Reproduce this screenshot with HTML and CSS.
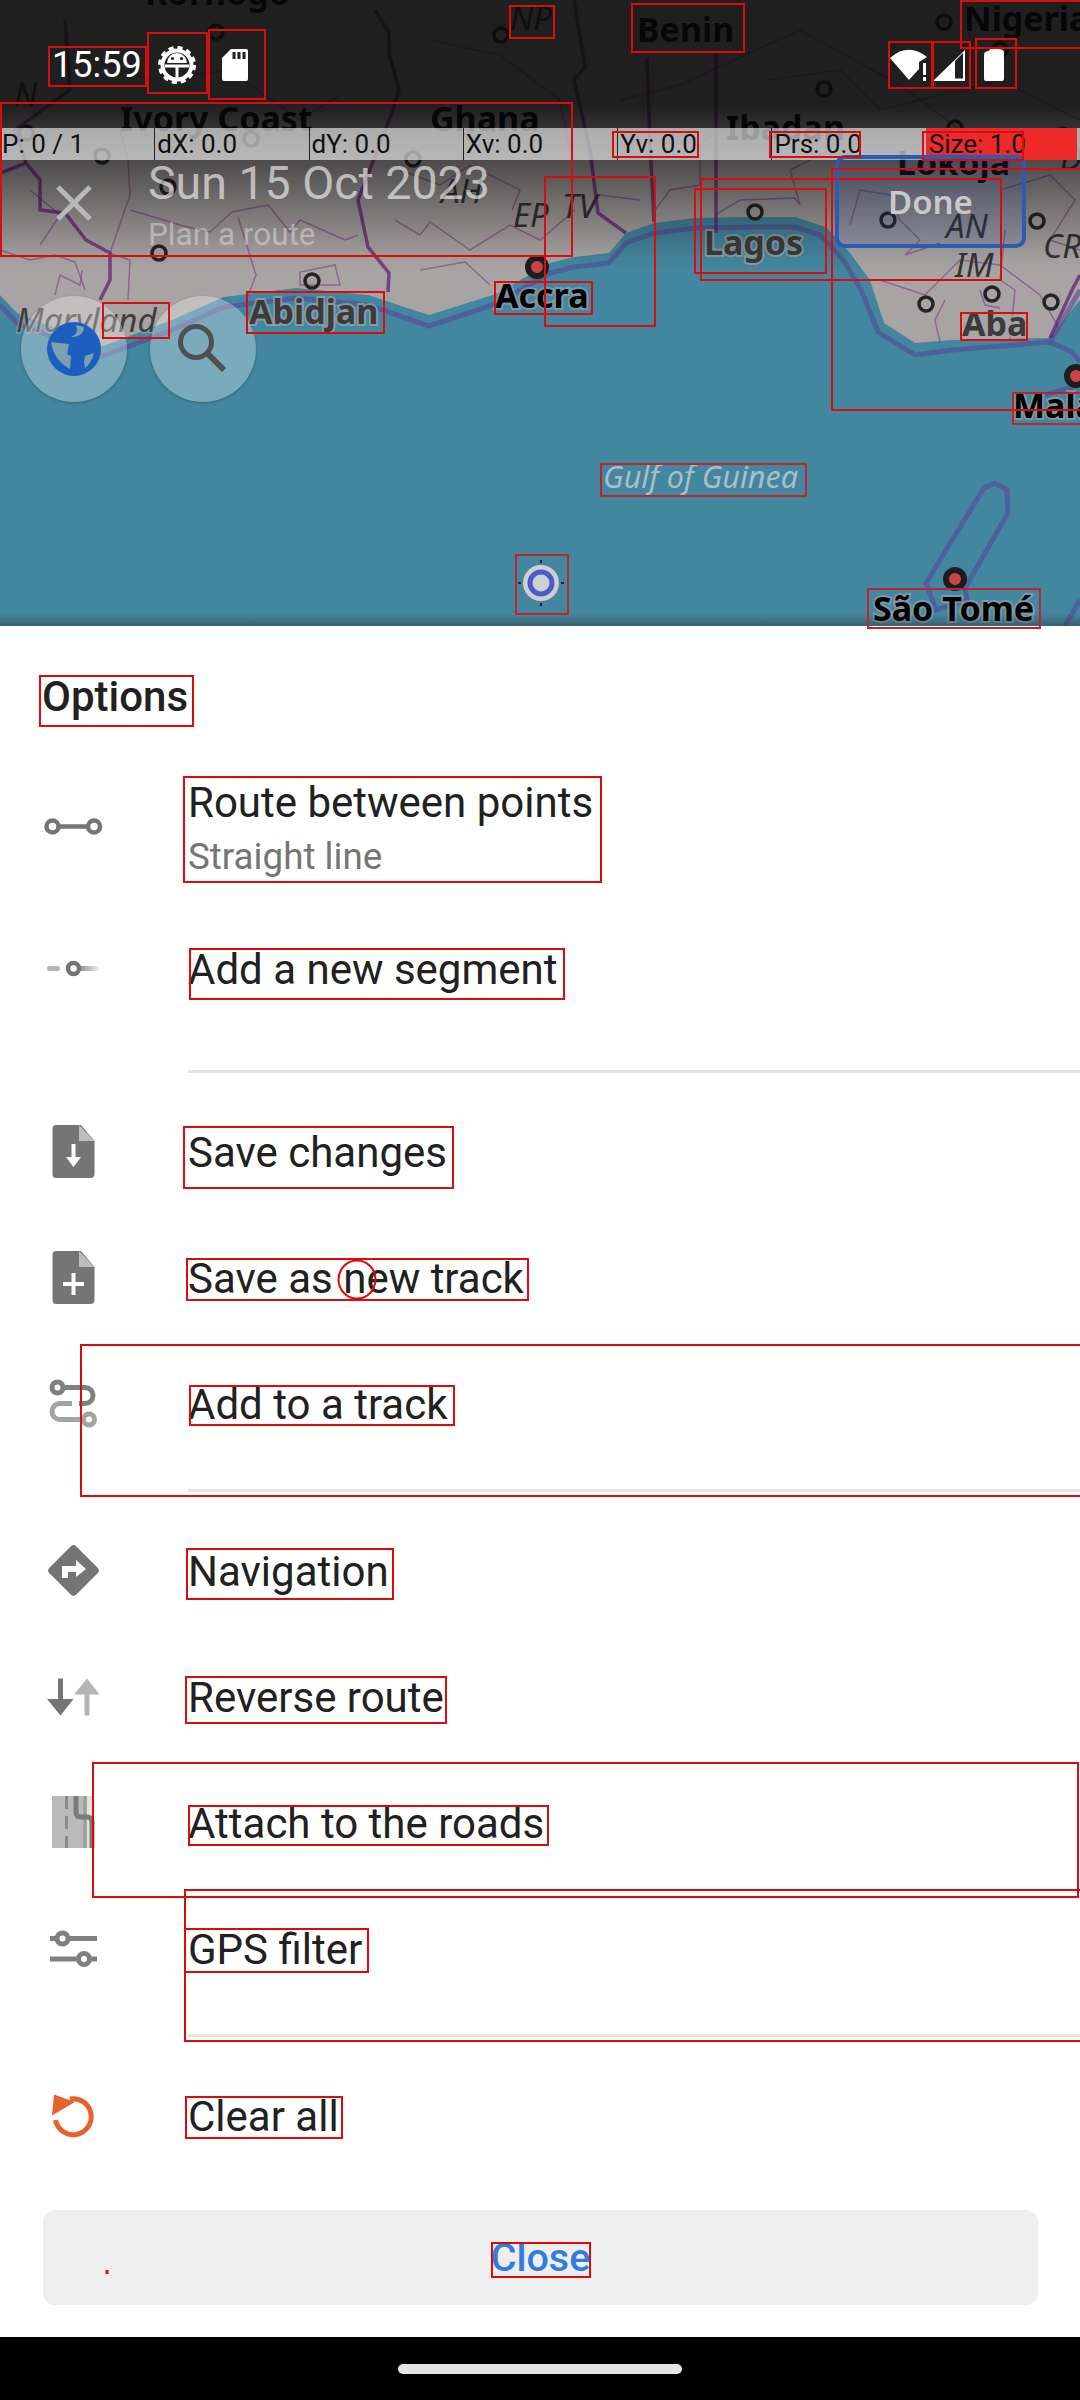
FILE: index.html
```html
<!DOCTYPE html>
<html lang="en">
<head>
<meta charset="utf-8">
<title>Plan a route</title>
<link rel="stylesheet" href="styles.css">
</head>
<body>
<div class="page">
  <section class="map">
    <svg class="map-canvas" width="1080" height="626" viewBox="0 0 1080 626">
      <rect width="1080" height="626" class="sea"/>
      <path class="land" d="M0,0 L1080,0 L1080,300 L1062,322 L1050,338 L953,340 L915,343 L884,323 L870,280 L850,253 L826,227 L795,217 L753,217 L695,218 L654,223 L626,233 L609,253 L574,257 L550,263 L496,294 L429,315 L368,295 L296,288 L224,297 L172,320 L103,346 L60,330 L17,313 L0,295 Z"/>
      <path class="sea-border" d="M0,305 L17,323 L60,340 L103,356 L172,330 L224,307 L296,298 L368,305 L429,326 L496,304 L550,273 L574,267 L609,263 L626,243 L654,233 L695,228 L753,227 L795,227 L820,235 L845,262 L862,292 L878,332 L915,355 L953,350 L1050,342 L1080,290"/>
      <path class="sea-border" d="M1050,342 L1072,352 L1080,362 M1080,385 L1045,395 M926,583 L984,488 L995,483 L1007,490 L1008,513 L965,588 L967,600 L936,610 Z M1065,626 L1080,600"/>
      <g class="thin">
        <path d="M110,253 L130,195 L128,160 L120,130"/>
        <path d="M110,253 L130,260 L128,300"/>
        <path d="M40,245 L60,215 L30,190"/>
        <path d="M0,250 L30,260 L55,255 L75,262 L85,290"/>
        <path d="M130,210 L180,225 L210,232 L232,212 L268,205 L290,232 L300,220 L345,240 L358,235"/>
        <path d="M238,217 L256,275 L248,296"/>
        <path d="M55,295 L60,275 L80,285 L82,270"/>
        <path d="M300,272 L335,265 L340,285 L300,285 Z"/>
        <path d="M395,220 L420,235 L430,222 L470,250 L510,225 L540,240 L575,210"/>
        <path d="M400,170 L440,185 L470,165 L520,190 L512,210"/>
        <path d="M420,270 L465,262 L490,285"/>
        <path d="M640,200 L600,195 L585,215"/>
        <path d="M655,210 L670,190 L700,185 L700,145 L716,130"/>
        <path d="M715,215 L740,200 L795,198 L800,205 L790,170 L830,150"/>
        <path d="M850,225 L860,190 L890,195 L900,220 L920,240 L905,255 L940,243"/>
        <path d="M1000,190 L1050,175 L1075,200 L1050,240 L1080,250"/>
        <path d="M1005,230 L1000,280 L1015,290 L1010,340"/>
        <path d="M880,280 L925,295 L960,260 L1000,265 L1040,295 L1060,330"/>
        <path d="M945,300 L935,320 L940,342"/>
        <path d="M980,290 L985,305 L1000,308"/>
        <path d="M70,50 L150,80 L230,70 L300,120 L340,95"/>
        <path d="M430,40 L500,55 L560,100 L570,150"/>
        <path d="M620,100 L680,85 L800,30 L900,85 L960,130"/>
        <path d="M770,80 L840,70 L880,110 L1000,80 L1080,120"/>
      </g>
      <g class="thick">
        <path d="M375,10 L389,33 L389,53 L399,90 L392,113 L358,200 L368,247 L389,273 L388,292"/>
        <path d="M0,173 L26,163 L40,180 L40,210 L65,213 L86,240 L110,253 L110,280 L100,300"/>
        <path d="M26,163 L15,130 L70,90 L65,20"/>
        <path d="M574,0 L585,67 L574,80 L590,150 L598,213 L626,233"/>
        <path d="M647,57 L650,143 L654,222"/>
        <path d="M716,53 L716,233"/>
        <path d="M1050,338 L1072,290 L1080,275"/>
      </g>
      <g class="town">
        <circle cx="216" cy="32" r="7"/><circle cx="501" cy="35" r="7"/><circle cx="102" cy="156" r="7"/>
        <circle cx="26" cy="133" r="7"/><circle cx="251" cy="139" r="7"/><circle cx="413" cy="159" r="7"/>
        <circle cx="168" cy="187" r="7"/><circle cx="159" cy="253" r="7"/><circle cx="312" cy="281" r="7"/>
        <circle cx="944" cy="22" r="7"/><circle cx="824" cy="89" r="7"/><circle cx="955" cy="128" r="7"/>
        <circle cx="1063" cy="135" r="7"/><circle cx="755" cy="212" r="7"/><circle cx="888" cy="220" r="7"/>
        <circle cx="1037" cy="221" r="7"/><circle cx="926" cy="304" r="7"/><circle cx="992" cy="294" r="7"/>
        <circle cx="1051" cy="302" r="7"/><circle cx="1000" cy="50" r="7"/>
      </g>
      <g class="capital">
        <circle cx="537" cy="267" r="9"/><circle cx="1076" cy="376" r="9"/><circle cx="955" cy="579" r="9"/>
      </g>
      <text class="lbl-dark" x="145" y="5">Korhogo</text>
      <text class="lbl-dark" x="120" y="131">Ivory Coast</text>
      <text class="lbl-dark" x="430" y="131">Ghana</text>
      <text class="lbl-dark" x="637" y="42">Benin</text>
      <text class="lbl-dark" x="964" y="31">Nigeria</text>
      <text class="lbl-dark" x="726" y="140">Ibadan</text>
      <text class="lbl-dark" x="897" y="175">Lokoja</text>
      <text class="lbl-city" x="704" y="255">Lagos</text>
      <text class="lbl-city" x="249" y="324">Abidjan</text>
      <text class="lbl-city" x="962" y="336">Aba</text>
      <text class="lbl-capital" x="495" y="308">Accra</text>
      <text class="lbl-capital" x="1013" y="418">Malabo</text>
      <text class="lbl-capital" x="873" y="621">São Tomé</text>
      <text class="lbl-sea" x="603" y="488">Gulf of Guinea</text>
      <text class="lbl-region" x="16" y="332">Maryland</text>
      <text class="lbl-state" x="946" y="238">AN</text>
      <text class="lbl-state" x="955" y="277">IM</text>
      <text class="lbl-state" x="1043" y="258">CR</text>
      <text class="lbl-state" x="562" y="218">TV</text>
      <text class="lbl-state" x="513" y="227">EP</text>
      <text class="lbl-state" x="441" y="203">AH</text>
      <text class="lbl-state" x="510" y="30">NP</text>
      <text class="lbl-state" x="14" y="107">N</text>
      <text class="lbl-state" x="1060" y="170">D</text>
      <g class="marker">
        <circle class="marker-disc" cx="541" cy="583" r="18"/>
        <circle class="marker-ring" cx="541" cy="583" r="11"/>
        <path class="marker-tick" d="M541,560 V563 M541,603 V606 M518,583 H521 M561,583 H564"/>
      </g>
    </svg>
    <div class="scrim"></div>
    <div class="shade"></div>

    <div class="statusbar">
      <span class="clock">15:59</span>
      <svg class="st-gear" width="40" height="40" viewBox="0 0 40 40">
        <circle class="w-line" cx="20" cy="20" r="14.5"/>
        <circle class="w-teeth" cx="20" cy="20" r="17"/>
        <path class="w-fill" d="M10,18 A10,10 0 0 1 30,18 Z"/>
        <circle class="d-fill" cx="15.5" cy="13.5" r="1.6"/><circle class="d-fill" cx="24.5" cy="13.5" r="1.6"/>
        <path class="w-line2" d="M8,21 H32 M20,21 V33"/>
      </svg>
      <svg class="st-sd" width="26" height="32" viewBox="0 0 26 32">
        <path class="w-fill" d="M9,0 H24 Q26,0 26,2 V30 Q26,32 24,32 H2 Q0,32 0,30 V9 Z"/>
        <path class="d-line" d="M12,3 V10 M17,3 V10 M22,3 V10"/>
      </svg>
      <span class="st-spacer"></span>
      <svg class="st-net" width="122" height="32" viewBox="0 0 122 32">
        <path class="w-fill" d="M0,9 Q18,-7 37,8 L29,13 V20 L19,31 Z"/>
        <path class="w-fill" d="M33,14 H36 V26 H33 Z M33,28 H36 V32 H33 Z"/>
        <path class="w-fill" d="M43,32 L75,1 V32 Z"/>
        <path class="d-fill" d="M65,12 L73,4 V29.500 H65 Z"/>
        <path class="w-fill" d="M99,2 Q99,0 101,0 H107 Q114,0 114,3 V30 Q114,32 112,32 H96 Q94,32 94,30 V6 Q94,2 99,2 Z"/>
      </svg>
    </div>

    <div class="debug">
      <span class="dbg">P: 0 / 1</span>
      <span class="dbg dbg-sep">dX: 0.0</span>
      <span class="dbg dbg-sep">dY: 0.0</span>
      <span class="dbg dbg-sep">Xv: 0.0</span>
      <span class="dbg dbg-sep">Yv: 0.0</span>
      <span class="dbg dbg-sep">Prs: 0.0</span>
      <span class="dbg dbg-hot">Size: 1.0</span>
    </div>

    <div class="toolbar">
      <svg class="tb-close" width="36" height="36" viewBox="0 0 36 36"><path d="M2,2 L34,34 M34,2 L2,34"/></svg>
      <div class="tb-titles">
        <div class="tb-title">Sun 15 Oct 2023</div>
        <div class="tb-sub">Plan a route</div>
      </div>
      <div class="done"><span>Done</span></div>
    </div>

    <div class="fab fab-globe">
      <svg width="54" height="54" viewBox="0 0 54 54">
        <circle class="globe-bg" cx="27" cy="27" r="27"/>
        <path class="globe-land" d="M4,20 L12,21 L22,22 L20,32 L24,34 L23,47 C15,43 6,34 4,20 Z"/>
        <path class="globe-land" d="M29,3 L37,5 C37,10 34,14 27,15 L24,15 C30,13 31,8 29,3 Z"/>
        <path class="globe-land" d="M38,34 L47,31 C45,38 42,43 38,46 L37,40 Z"/>
      </svg>
    </div>
    <div class="fab fab-search">
      <svg width="54" height="54" viewBox="0 0 54 54">
        <circle class="search-ring" cx="20" cy="20" r="15.500"/>
        <path class="search-handle" d="M31,31 L48,48"/>
      </svg>
    </div>
  </section>

  <section class="sheet">
    <h2 class="sheet-title">Options</h2>

    <div class="row row-two">
      <svg class="ic" width="63" height="63" viewBox="0 0 63 63">
        <circle class="ic-line" cx="10.500" cy="31.500" r="6"/><circle class="ic-line" cx="52" cy="31.500" r="6"/>
        <path class="ic-line" d="M16.500,31.500 H46"/>
      </svg>
      <div class="row-text">
        <div class="row-title">Route between points</div>
        <div class="row-sub">Straight line</div>
      </div>
    </div>
    <div class="row">
      <svg class="ic" width="63" height="63" viewBox="0 0 63 63">
        <defs><linearGradient id="fade"><stop offset="0" stop-color="#8a8a8a"/><stop offset="1" stop-color="#f2f2f2"/></linearGradient></defs>
        <rect class="ic-light" x="5" y="29" width="13" height="5" rx="2.500"/>
        <rect x="37" y="29" width="20" height="5" fill="url(#fade)"/>
        <circle class="ic-line" cx="31.500" cy="31.500" r="5.500"/>
      </svg>
      <div class="row-title">Add a new segment</div>
    </div>
    <div class="divider divider-wide"></div>

    <div class="row">
      <svg class="ic" width="63" height="63" viewBox="0 0 63 63">
        <path class="ic-dark" d="M14,5 H39 L52.500,21 V54 Q52.500,58 48.500,58 H14 Q10.500,58 10.500,54 V9 Q10.500,5 14,5 Z"/>
        <path class="ic-fold" d="M37,5 L52.500,21 H37 Z"/>
        <path class="ic-white" d="M29.500,24 H33.500 V37 H39 L31.500,47 L24,37 H29.500 Z"/>
      </svg>
      <div class="row-title">Save changes</div>
    </div>
    <div class="row">
      <svg class="ic" width="63" height="63" viewBox="0 0 63 63">
        <path class="ic-dark" d="M14,5 H39 L52.500,21 V54 Q52.500,58 48.500,58 H14 Q10.500,58 10.500,54 V9 Q10.500,5 14,5 Z"/>
        <path class="ic-fold" d="M37,5 L52.500,21 H37 Z"/>
        <path class="ic-white" d="M29.500,27 H33.500 V36 H42 V40 H33.500 V49 H29.500 V40 H21 V36 H29.500 Z"/>
      </svg>
      <div class="row-title">Save as new track</div>
    </div>
    <div class="row">
      <svg class="ic" width="63" height="63" viewBox="0 0 63 63">
        <circle class="ic-mid" cx="15.500" cy="15.500" r="5.500"/>
        <path class="ic-mid" d="M21,15.500 H43 A8,8 0 0 1 43,31.500 H37"/>
        <path class="ic-soft" d="M30,31.500 H18 A8,8 0 0 0 18,47.500 H41"/>
        <circle class="ic-soft" cx="47" cy="47.500" r="5.500"/>
      </svg>
      <div class="row-title">Add to a track</div>
    </div>
    <div class="divider"></div>

    <div class="row">
      <svg class="ic" width="63" height="63" viewBox="0 0 63 63">
        <rect class="ic-dark" x="12.500" y="12.500" width="38" height="38" rx="4" transform="rotate(45 31.500 31.500)"/>
        <path class="ic-white" d="M20,39 V27 H34 V21 L44,30 L34,38 V33 H26 V39 Z"/>
      </svg>
      <div class="row-title">Navigation</div>
    </div>
    <div class="row">
      <svg class="ic" width="63" height="63" viewBox="0 0 63 63">
        <path class="ic-dark" d="M16,13.500 H21 V34 H31.500 L18.500,50.500 L5,34 H16 Z"/>
        <path class="ic-light" d="M45,13.500 L57.500,29.500 H47.500 V50.500 H42.500 V29.500 H32 Z"/>
      </svg>
      <div class="row-title">Reverse route</div>
    </div>
    <div class="row">
      <svg class="ic" width="63" height="63" viewBox="0 0 63 63">
        <rect class="ic-road" x="10" y="5" width="35" height="52"/>
        <rect class="ic-road-light" x="45" y="5" width="6" height="52"/>
        <path class="ic-dash" d="M24.500,5 V57"/>
        <path class="ic-lane" d="M43,5 V57"/>
        <path class="ic-track" d="M34,5 V21 Q34,26 39,26 H45 Q50,26 50,31 V57"/>
      </svg>
      <div class="row-title">Attach to the roads</div>
    </div>
    <div class="row">
      <svg class="ic" width="63" height="63" viewBox="0 0 63 63">
        <path class="ic-mid" d="M8,21.500 H14 M27,21.500 H55 M8,42 H35.500 M48.500,42 H55"/>
        <circle class="ic-mid" cx="20.500" cy="21.500" r="5.500"/>
        <circle class="ic-mid" cx="42" cy="42" r="5.500"/>
      </svg>
      <div class="row-title">GPS filter</div>
    </div>
    <div class="divider"></div>

    <div class="row">
      <svg class="ic" width="63" height="63" viewBox="0 0 63 63">
        <path class="ic-undo" d="M28,15 A18,18 0 1 1 13.500,36"/>
        <path class="ic-undo-head" d="M10,31.500 L12,10.500 L33,18 Z"/>
      </svg>
      <div class="row-title">Clear all</div>
    </div>

    <div class="close-btn"><span>Close</span></div>
  </section>

  <footer class="navbar"><span class="handle"></span></footer>
</div>

<svg class="boxes" width="1080" height="2400" viewBox="0 0 1080 2400">
  <g class="box-top">
    <rect x="49" y="47" width="97" height="39"/>
    <rect x="148" y="33" width="59" height="60"/>
    <rect x="209" y="30" width="56" height="69"/>
    <rect x="1" y="103" width="571" height="153"/>
    <rect x="510" y="6" width="44" height="32"/>
    <rect x="632" y="4" width="112" height="48"/>
    <rect x="961" y="1" width="120" height="47"/>
    <rect x="889" y="42" width="43" height="46"/>
    <rect x="933" y="42" width="37" height="46"/>
    <rect x="976" y="39" width="40" height="49"/>
    <rect x="613" y="132" width="85" height="25"/>
    <rect x="770" y="132" width="90" height="25"/>
    <rect x="923" y="132" width="100" height="28"/>
    <rect x="545" y="177" width="110" height="149"/>
    <rect x="695" y="189" width="131" height="84"/>
    <rect x="701" y="179" width="300" height="101"/>
    <rect x="832" y="169" width="250" height="241"/>
    <rect x="495" y="282" width="97" height="32"/>
    <rect x="247" y="292" width="137" height="41"/>
    <rect x="103" y="303" width="66" height="35"/>
    <rect x="961" y="313" width="66" height="27"/>
  </g>
  <g class="box-low">
    <rect x="1013" y="393" width="68" height="31"/>
    <rect x="601" y="464" width="205" height="32"/>
    <rect x="516" y="555" width="52" height="59"/>
    <rect x="868" y="589" width="172" height="39"/>
  </g>
  <g class="box-top">
    <rect x="40" y="676" width="153" height="50"/>
    <rect x="184" y="777" width="417" height="105"/>
    <rect x="190" y="949" width="374" height="50"/>
    <rect x="184" y="1127" width="269" height="61"/>
    <rect x="187" y="1259" width="341" height="41"/>
    <ellipse cx="357" cy="1279.500" rx="18.500" ry="19"/>
    <rect x="81" y="1345" width="1000" height="151"/>
    <rect x="190" y="1386" width="264" height="39"/>
    <rect x="187" y="1549" width="206" height="50"/>
    <rect x="186" y="1677" width="260" height="46"/>
    <rect x="93" y="1763" width="985" height="134"/>
    <rect x="189" y="1806" width="359" height="39"/>
    <rect x="185" y="1890" width="896" height="151"/>
    <rect x="185" y="1929" width="183" height="43"/>
    <rect x="186" y="2097" width="156" height="41"/>
    <rect x="492" y="2243" width="98" height="34"/>
    <rect x="106.500" y="2271" width="1" height="2"/>
  </g>
</svg>
</body>
</html>
```

FILE: styles.css
```css
* { box-sizing: border-box; }
html, body { margin: 0; padding: 0; }
body { width: 1080px; height: 2400px; overflow: hidden; font-family: Roboto, sans-serif; background: #fff; position: relative; }
.page { display: flex; flex-direction: column; width: 1080px; height: 2400px; }

/* map */
.map { position: relative; height: 626px; flex: none; overflow: hidden; }
.map-canvas { position: absolute; left: 0; top: 0; }
.sea { fill: #43869f; }
.land { fill: #a9a4a4; }
.sea-border { fill: none; stroke: rgba(86, 72, 150, .6); stroke-width: 5; }
.thin path { fill: none; stroke: rgba(118, 52, 130, .55); stroke-width: 1.5; }
.thick path { fill: none; stroke: rgba(96, 24, 112, .7); stroke-width: 3.5; }
.town circle { fill: none; stroke: #242424; stroke-width: 3.5; }
.capital circle { fill: #c94545; stroke: #1d1d1d; stroke-width: 6; }
.map-canvas text { font-family: "Noto Sans", sans-serif; paint-order: stroke; }
.lbl-dark { font-size: 34px; font-weight: 700; fill: #000; }
.lbl-city { font-size: 34px; font-weight: 700; fill: #3b3b3b; stroke: rgba(165, 165, 165, .7); stroke-width: 4px; }
.lbl-capital { font-size: 34px; font-weight: 700; fill: #000; stroke: rgba(165, 165, 165, .6); stroke-width: 4px; }
.lbl-sea { font-size: 30.5px; font-style: italic; fill: #a9bfc7; }
.lbl-region { font-size: 33px; font-style: italic; fill: #3e3e3e; stroke: rgba(165, 165, 165, .6); stroke-width: 3px; }
.lbl-state { font-size: 33px; font-style: italic; fill: #333; }
.marker-disc { fill: #cfcfd2; }
.marker-ring { fill: none; stroke: #4b5bc9; stroke-width: 5; }
.marker-tick { stroke: #222; stroke-width: 2; fill: none; }

.scrim { position: absolute; left: 0; top: 0; width: 1080px; height: 290px; background: linear-gradient(rgba(8, 8, 8, .85) 0, rgba(8, 8, 8, .85) 105px, rgba(8, 8, 8, .55) 165px, rgba(8, 8, 8, .05) 256px, rgba(8, 8, 8, 0) 270px); }
.shade { position: absolute; left: 0; bottom: 0; width: 1080px; height: 12px; background: linear-gradient(rgba(40, 40, 40, 0), rgba(40, 40, 40, .4)); }

.statusbar { position: absolute; left: 0; top: 45px; width: 1080px; height: 40px; display: flex; align-items: center; padding: 0 66px 0 52px; }
.clock { color: #fff; font-size: 36px; line-height: 40px; width: 105px; flex: none; }
.st-gear { flex: none; margin-top: 0; }
.st-sd { flex: none; margin-left: 25px; }
.st-spacer { flex: 1; }
.st-net { flex: none; margin-right: 2px; overflow: visible; }
.w-fill { fill: #fff; }
.d-fill { fill: #202020; }
.d-line { stroke: #202020; stroke-width: 3; fill: none; }
.w-line { fill: none; stroke: #fff; stroke-width: 4; }
.w-line2 { fill: none; stroke: #fff; stroke-width: 3; }
.w-teeth { fill: none; stroke: #fff; stroke-width: 4; stroke-dasharray: 5 3.900; }

.debug { position: absolute; left: 0; top: 128px; width: 1080px; height: 32px; display: grid; grid-template-columns: repeat(7, 1fr); background: rgba(255, 255, 255, .6); }
.dbg { font-size: 26px; line-height: 32px; color: #111; padding-left: 2px; white-space: nowrap; }
.dbg-sep { border-left: 1px solid #222; }
.dbg-hot { background: #ec2a2a; margin-right: 3px; padding-left: 3px; }

.toolbar { position: absolute; left: 0; top: 160px; width: 1080px; height: 96px; display: flex; }
.tb-close { flex: none; margin: 25px 0 0 56px; stroke: #b8b8b8; stroke-width: 5; fill: none; }
.tb-titles { flex: 1; margin-left: 56px; color: rgba(255, 255, 255, .6); }
.tb-title { font-size: 46.5px; line-height: 50px; margin-top: -2px; white-space: nowrap; }
.tb-sub { font-size: 31.5px; line-height: 36px; margin-top: 9px; white-space: nowrap; color: rgba(255, 255, 255, .38); }
.done { position: absolute; left: 835px; top: -5px; width: 191px; height: 93px; border: 4px solid #2a5cb4; border-radius: 10px; background: rgba(50, 80, 170, .14); display: flex; align-items: center; justify-content: center; }
.done span { font-family: "Noto Sans", sans-serif; font-weight: 600; font-size: 33px; color: #c9c9c9; }

.fab { position: absolute; top: 296px; width: 106px; height: 106px; border-radius: 50%; background: rgba(255, 255, 255, .3); box-shadow: 0 1px 3px rgba(0, 0, 0, .25); display: flex; align-items: center; justify-content: center; }
.fab-globe { left: 21px; }
.fab-search { left: 150px; }
.globe-bg { fill: #1d5fc1; }
.globe-land { fill: #7ba0ae; }
.search-ring { fill: none; stroke: #4f5050; stroke-width: 5; }
.search-handle { stroke: #4f5050; stroke-width: 6; fill: none; }

/* sheet */
.sheet { flex: 1; background: #fff; }
.sheet-title { margin: 0; height: 121px; padding: 48px 0 0 42px; font-size: 42px; line-height: 46px; font-weight: 500; color: #212121; }
.row { display: flex; align-items: center; height: 126px; padding-left: 42px; }
.row-two { height: 158px; }
.ic { flex: none; margin-right: 83px; }
.row-text { display: flex; flex-direction: column; padding-top: 5px; }
.row-title { font-size: 42px; line-height: 46px; padding-top: 3px; color: #212121; white-space: nowrap; }
.row-sub { font-size: 36.75px; line-height: 46px; color: #757575; white-space: nowrap; margin-top: 8px; }
.divider { height: 3px; margin: 23px 0 15px 188px; background: #e4e4e4; }
.divider-wide { margin-top: 39px; }
.ic-line { fill: none; stroke: #757575; stroke-width: 4.500; }
.ic-light { fill: #b5b5b5; }
.ic-dark { fill: #757575; }
.ic-fold { fill: #bdbdbd; }
.ic-white { fill: #fff; }
.ic-mid { fill: none; stroke: #808080; stroke-width: 5; }
.ic-soft { fill: none; stroke: #a3a3a3; stroke-width: 5; }
.ic-road { fill: #bababa; }
.ic-road-light { fill: #e2e2e2; }
.ic-dash { stroke: #8a8a8a; stroke-width: 3; stroke-dasharray: 13 7; fill: none; }
.ic-lane { stroke: #9a9a9a; stroke-width: 3; fill: none; }
.ic-track { stroke: #7a7a7a; stroke-width: 5; fill: none; }
.ic-undo { fill: none; stroke: #e5622c; stroke-width: 5; }
.ic-undo-head { fill: #e5622c; }

.close-btn { height: 95px; margin: 32px 42px 0 43px; background: #eeeeee; border-radius: 12px; display: flex; align-items: center; justify-content: center; }
.close-btn span { font-size: 39.4px; font-weight: 500; color: #2f7de1; }

.navbar { flex: none; height: 63px; background: #000; display: flex; align-items: center; justify-content: center; }
.handle { width: 284px; height: 10px; border-radius: 5px; background: #e4e4e4; }

/* annotation rectangles drawn over the screenshot */
.boxes { position: absolute; left: 0; top: 0; pointer-events: none; }
.box-top rect, .box-top ellipse { fill: none; stroke: #dc0c0c; stroke-width: 2; }
.box-low rect { fill: none; stroke: #bb252b; stroke-width: 2; }
```
